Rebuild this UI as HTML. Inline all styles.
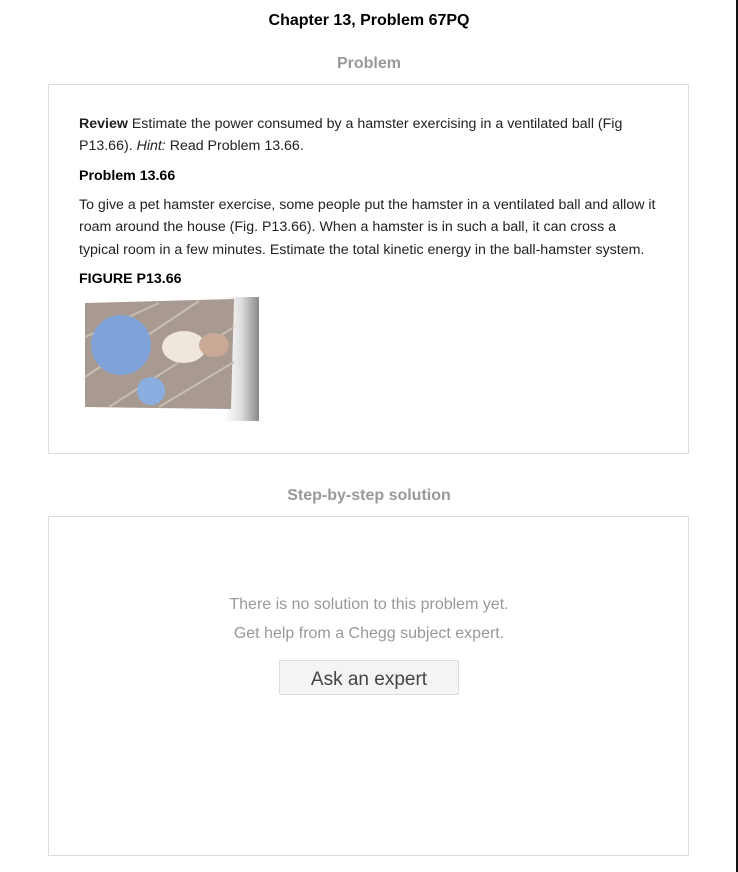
<!DOCTYPE html>
<html><head><style>
body{margin:0;width:738px;height:872px;background:#fff;font-family:"Liberation Sans",Arial,sans-serif;position:relative;overflow:hidden}
.rb{position:absolute;left:736px;top:0;width:2px;height:872px;background:#111}
.t{position:absolute;left:0;width:738px;text-align:center;font-weight:bold}
.box{position:absolute;left:48px;width:639px;border:1px solid #ddd;background:#fff}
p{margin:0;font-size:14.2px;line-height:22.5px;color:#222}
.tx{position:absolute;left:79px;width:580px}
.c{position:absolute;left:0;width:738px;text-align:center;color:#999;font-size:16px}
.btn{position:absolute;left:279px;top:660px;width:178px;height:33px;border:1px solid #ddd;background:#f4f4f4;border-radius:2px;text-align:center;line-height:37px;font-size:19px;color:#444}
</style></head><body>
<div class="rb"></div>
<div class="t" style="top:12px;font-size:16px;color:#000">Chapter 13, Problem 67PQ</div>
<div class="t" style="top:55px;font-size:16px;color:#999">Problem</div>
<div class="box" style="top:84px;height:368px"></div>
<div class="tx" style="top:113px">
<p style="line-height:22px"><b>Review</b> Estimate the power consumed by a hamster exercising in a ventilated ball (Fig P13.66). <i>Hint:</i> Read Problem 13.66.</p>
<p style="margin-top:8px;font-weight:bold;color:#000">Problem 13.66</p>
<p style="margin-top:6px">To give a pet hamster exercise, some people put the hamster in a ventilated ball and allow it roam around the house (Fig. P13.66). When a hamster is in such a ball, it can cross a typical room in a few minutes. Estimate the total kinetic energy in the ball-hamster system.</p>
<p style="margin-top:7px;font-weight:bold;color:#000">FIGURE P13.66</p>
</div>
<svg style="position:absolute;left:79px;top:297px" width="180" height="124" viewBox="0 0 180 124">
<defs><linearGradient id="g" x1="0" x2="1"><stop offset="0" stop-color="#fff"/><stop offset="0.5" stop-color="#ddd"/><stop offset="1" stop-color="#888"/></linearGradient></defs>
<rect width="180" height="124" fill="#fff"/>
<rect x="145" y="0" width="35" height="124" fill="url(#g)"/>
<path d="M6 6 L155 2 L152 112 L6 110 Z" fill="#a89a90"/>
<g stroke="#c8bdb3" stroke-width="2"><line x1="6" y1="40" x2="80" y2="6"/><line x1="6" y1="80" x2="120" y2="4"/><line x1="30" y1="110" x2="155" y2="30"/><line x1="80" y1="110" x2="155" y2="65"/></g>
<circle cx="42" cy="48" r="30" fill="#7fa2d8"/>
<circle cx="72" cy="94" r="14" fill="#8aaee0"/>
<ellipse cx="105" cy="50" rx="22" ry="16" fill="#efe6dd"/>
<ellipse cx="135" cy="48" rx="15" ry="12" fill="#c9a996"/>
</svg>
<div class="t" style="top:487px;font-size:16px;color:#999">Step-by-step solution</div>
<div class="box" style="top:516px;height:338px"></div>
<div class="c" style="top:596px">There is no solution to this problem yet.</div>
<div class="c" style="top:625px">Get help from a Chegg subject expert.</div>
<div class="btn">Ask an expert</div>
</body></html>
